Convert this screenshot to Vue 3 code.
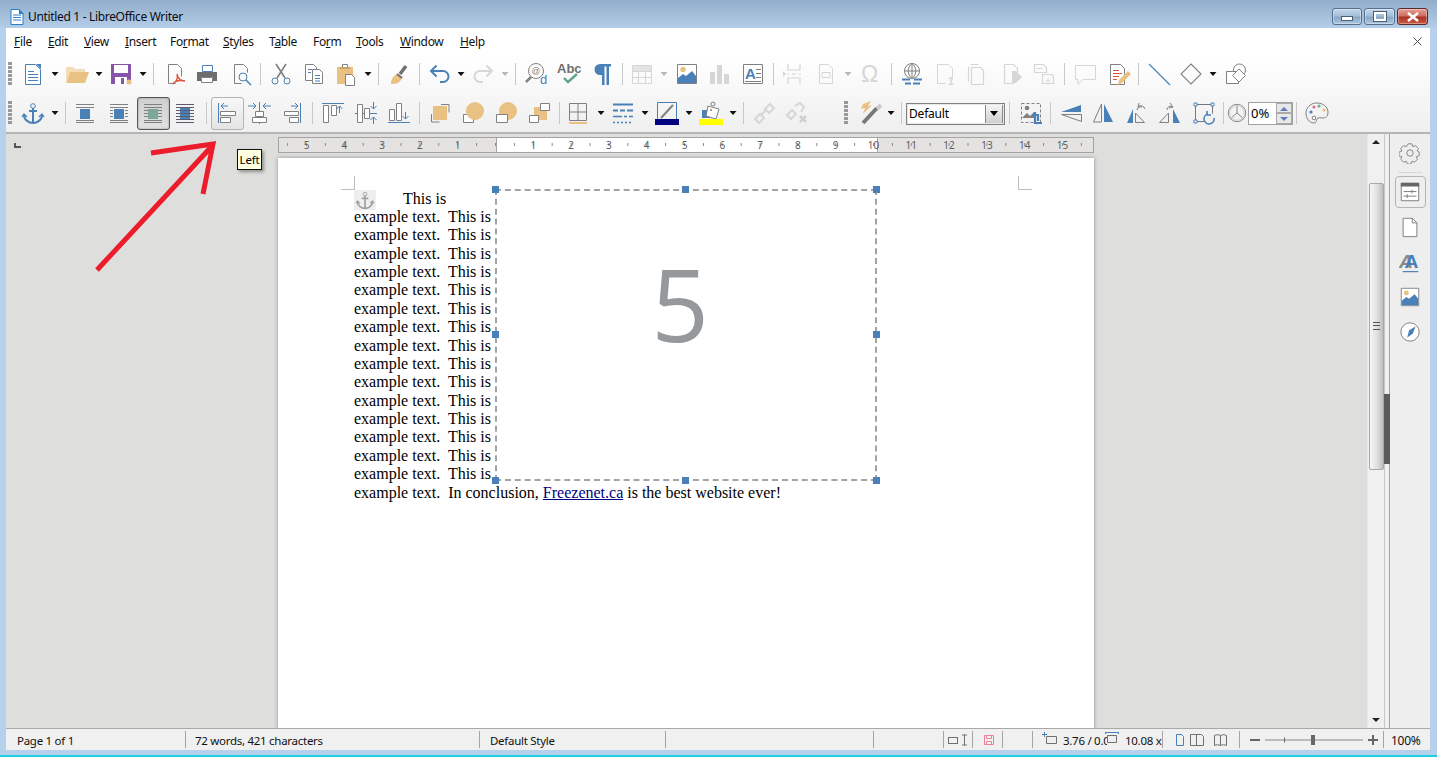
<script setup>
const B = '#4a80b8', G = '#808080', O = '#e9c283', D = '#d6d6d6', R = '#d9543a'
const s = (d, c = G, w = 1) => `<path d="${d}" fill="none" stroke="${c}" stroke-width="${w}"/>`
const f = (d, c = G) => `<path d="${d}" fill="${c}"/>`
const w = (d, c = G) => `<path d="${d}" fill="#fff" stroke="${c}"/>`
const c = (x, y, r, fill = 'none', st = 'none') => `<circle cx="${x}" cy="${y}" r="${r}" fill="${fill}" stroke="${st}"/>`
const t = (x, y, str, size, fill, weight = 400) => `<text x="${x}" y="${y}" font-family="Liberation Sans, sans-serif" font-size="${size}" font-weight="${weight}" fill="${fill}">${str}</text>`

const icons = {
  new: w('M4.5 2.5h10l5 5v15h-15z', B) + f('M15 2h5v5z', B) + s('M7 9.5h6M7 12.5h10M7 15.5h10M7 18.5h10', B),
  open: f('M1 20V6l1-1h6l2 2h10v3H5z', '#f3dcb6') + f('M1 21l4-11h19l-4 11z', O),
  save: f('M2 2h20v20H2z', '#8654a8') + f('M5 3h14v8H5z', '#fff') + f('M6 15h12v7H6z', '#fff') + f('M12 16h3v6h-3z', '#8654a8') + c(20, 20, 2.5, O),
  pdf: s('M5.5 2.5h9l4 4v8M5.5 2.5v19h7', G) + s('M14 12c1 5 3 7 8 7-5-1-10 0-12 3 3-2 5-6 4-10', R, 1.3),
  print: f('M2 10h20v9H2z', '#6d6d6d') + w('M7.5 3.5h10v6h-10z', B) + f('M6 15h12v1H6z', '#fff') + w('M6.5 15.5h11v5h-11z', G),
  preview: s('M5.5 2.5h9l4 4v4M5.5 2.5v19h7', G) + c(14, 15, 4, 'none', B) + s('M17 18l5 5', B, 1.5),
  cut: s('M7 2l9 14M17 2L8 16', G, 1.6) + c(6, 19, 3, 'none', B) + c(18, 19, 3, 'none', B),
  copy: w('M3.5 2.5h8l3 3v13h-11z', G) + w('M10.5 7.5h7l3 3v11h-10z', G) + s('M13 13.5h5M13 16.5h5M13 19h5M6 7.5h4M6 10.5h3', B),
  paste: f('M3 5h16v17H3z', O) + w('M8.5 2.5h5v3h-5z', G) + w('M11.5 12.5h6l3 3v8h-9z', G) + f('M6 5h10v2H6z', '#c9a468'),
  clone: s('M14 12l6-8', '#707070', 3.5) + f('M5 22c0-5 2-8 6-10l5 4c-1 3-4 6-9 6z', O) + s('M11 12l5 4', '#707070', 2),
  undo: s('M4 9h12a5.5 5.5 0 010 11h-3', B, 2) + s('M9.5 3.5L4 9l5.5 5.5', B, 2),
  redo: s('M20 9H8a5.5 5.500 0 000 11h3', D, 2) + s('M14.5 3.5L20 9l-5.5 5.5', D, 2),
  find: c(11, 9, 7.5, 'none', G) + s('M6 15l-5 5', G, 2.5) + t(6.5, 12, '@', 8.5, G) + t(15, 22, 'd', 13, B),
  spell: t(0, 11, 'Abc', 13, '#707070', 700) + s('M7 16l4 4 9-8', '#5fa58f', 2.4),
  pilcrow: f('M10 2h11v2.5h-2V23h-2.5V4.5h-2V23H12V13h-2a5.5 5.5 0 010-11z', B),
  table: s('M2.5 3.5h19v18h-19zM2.5 9.5h19M2.5 15.5h19M8.5 3.5v18M15.5 3.5v18', D) + f('M3 4h18v5H3z', '#e4e4e4'),
  image: w('M2.5 2.5h19v19h-19z', G) + c(8, 7.5, 2.7, O) + f('M3 21v-5l5-4 3 2 6-5 4 5v7z', B),
  chart: f('M3 10h5v12H3zM10 3h5v19h-5zM17 12h5v10h-5z', D),
  textbox: w('M2.5 2.5h19v19h-19z', G) + t(4, 17, 'A', 15, B, 700) + s('M15 7.5h5M15 11.5h5M15 15.5h5M4 19.5h16', G),
  pagebreak: s('M6 2v6h12V2M6 22v-6h12v6M5 12h2M10 12h4M17 12h2', D, 1.2) + f('M1 9l3 3-3 3z', D),
  field: s('M5.5 2.5h9l4 4v15h-13z', D) + s('M8 10.5h8v5H8z', D),
  omega: t(2, 20, 'Ω', 23, D),
  link: c(12, 9, 7.5, 'none', G) + s('M12 1.5v15M4.5 9h15M12 1.5c-5 4-5 11 0 15M12 1.5c5 4 5 11 0 15', G) + s('M2 17.5h8M14 17.5h8M5 21.5h6M13 21.5h7', B, 2),
  fn: s('M4.5 2.5h11l4 4v11M4.5 2.5v19h8', D) + t(15, 23, '1', 10, D, 700),
  en: s('M5.5 2.5h8M3.5 4.5v15M6.5 5.5h9l3 3v14h-12z', D, 1.2),
  bookmark: s('M4.5 2.5h9l4 4v4M4.5 2.5v19h9', D, 1.2) + f('M12 9h4l6 6-6 6h-4z', D),
  cross: s('M2.5 2.5h9l3 3v5h-12zM10.5 12.5h9l2 2v7h-11z', D, 1.2) + s('M4 6.5h7M16 16v4M14 18l2 2 2-2', D),
  comment: s('M2.5 3.5h20v14H10l-5 5v-5H2.5z', D),
  track: w('M3.5 2.5h10l4 4v16h-14z', G) + s('M6 8.5h6M6 11.5h9M6 14.5h6M6 17.5h4', R) + f('M11 23l1-5 9-9 3 3-9 9z', O),
  line: s('M2 2l21 21', B, 1.1),
  diamond: s('M12 2l10 10-10 10L2 12z', G, 1.1),
  shapes: c(15.5, 8, 6, 'none', G) + w('M2.5 9.5h12v12h-12z', G) + w('M15 7l6.5 6.5-6.5 6.5-6.5-6.5z', G),
  anchor: c(12, 5, 2.3, 'none', B) + s('M12 7v15M8 10h8M3 14c0 5 5 8 9 8s9-3 9-8', B, 2) + s('M1 16l2-3 3 3M18 16l3-3 2 3', B, 1.3),
  wrap1: s('M3 3.5h18M3 6.5h18M3 19.5h18M3 21.5h18', G) + f('M7 8h10v10H7z', B),
  wrap2: s('M3 3.5h18M3 6.5h18M3 19.5h18M3 21.5h18M3 9.5h3M3 12.5h3M3 15.5h3M18 9.5h3M18 12.5h3M18 15.5h3', G) + f('M7 8h10v10H7z', B),
  wrap3: s('M3 3.5h18M3 6.5h18M3 19.5h18M3 21.5h18M3 9.5h18M3 12.5h18M3 15.5h18', G) + f('M7 8h10v10H7z', '#7ba899'),
  wrap4: f('M7 6h10v12H7z', B) + s('M3 3.5h18M3 6.5h18M3 9.5h18M3 12.5h18M3 15.5h18M3 18.5h18M3 21.5h18', '#5b5b6b'),
  alignL: s('M3.5 2v20M13 5H6M9 2L6 5l3 3', B) + w('M5.5 10.5h15v4h-15zM5.5 16.5h10v5h-10z', G),
  alignC: s('M12.5 1v22M1 5h7M6 2l3 3-3 3M24 5h-7M19 2l-3 3 3 3', B) + w('M8.5 10.5h8v5h-8zM5.5 16.5h14v5h-14z', G),
  alignR: s('M20.5 2v20M11 5h7M15 2l3 3-3 3', B) + w('M4.5 10.5h14v4h-14zM9.5 16.5h9v5h-9z', G),
  top: s('M1 2.5h22M18.5 12V5M15.5 8l3-3 3 3', B) + w('M2.5 4.5h5v17h-5zM10.5 4.5h5v10h-5z', G),
  mid: s('M1 12.5h22M19.5 1v7M16.5 5l3 3 3-3M19.5 23v-7M16.5 19l3-3 3 3', B) + w('M3.5 3.5h5v18h-5zM10.5 7.5h5v10h-5z', G),
  bot: s('M1 21.5h22M18.5 11v7M15.5 15l3 3 3-3', B) + w('M2.5 8.5h5v11h-5zM9.5 2.5h5v17h-5z', G),
  front: s('M13 3.5h8v8M3.5 13v8h8', G) + f('M5 5h14v14H5z', O),
  forward: w('M2.5 13.5h10v8h-10z', G) + c(14, 10, 9, O),
  backward: c(14, 10, 9, O) + w('M2.5 13.5h11v8h-11z', G),
  back: f('M7 6h13v13H7z', O) + w('M13.5 2.5h9v7h-9zM2.5 14.5h9v7h-9z', G),
  borders: s('M3.5 2.5h17v17h-17zM12 2.5v17M3.5 11h17', G) + f('M3 21h18v2H3z', O),
  bstyle: s('M2 3.5h20', B, 2) + s('M2 9.5h5M9 9.5h5M16 9.5h6', B, 2) + s('M2 15.5h9M13 15.5h3M18 15.5h4', B, 1.5) + s('M2 21.5h2M6 21.5h2M10 21.5h2M14 21.5h2M18 21.5h2', B, 1.5),
  lcolor: s('M2.5 1.5h19v17h-19z', B) + s('M6 17l12-13', G, 2),
  fcolor: f('M3 9h8v8H3z', B) + w('M9 5l11 3-3 10-10-3z', G) + c(14, 3, 2, 'none', G) + c(12, 9, 1, G),
  chain: s('M3 18l5-5 4 4-5 5zM13 8l5-5 4 4-5 5zM9 14l5-5', D, 2),
  unchain: s('M3 14l5-5 4 4-5 5zM11 5l5-3 4 4-3 5', D, 2) + s('M16 15l6 6M22 15l-6 6', '#cfcfcf', 2.5),
  magic: s('M3 22L17 7', '#777', 4) + s('M17 8L21 4', '#ccc', 4) + f('M3 3l8-3-3 5 4-1-9 9 2-6-4 1z', O),
  crop: s('M2.5 2.5h19v19h-19z', G).replace('stroke-width="1"', 'stroke-width="1" stroke-dasharray="3 2"') + c(8, 7, 2.3, G) + f('M3 17l5-5 3 3 4-4v6H3z', G) + s('M16 11v11h7M13 14h6v6', B, 2.2),
  flipV: f('M2 11l20-7v7z', B) + s('M2.5 13.5h20v7z', G),
  flipH: s('M10.5 3v18h-8z', G) + f('M13 3v18h9z', B),
  rotL: f('M2 22l6-14v14z', B) + s('M10.5 12v9.5h9zM12 9l2-4a5 5 0 016 3M14 2l-1 4 4 0', G),
  rotR: s('M1.5 21.5h9V12zM9 9c0-3 3-5 6-3M12 2l3 4-4 1', G) + f('M22 22l-7-14v14z', B),
  rot: s('M3.5 3.5h17v9', '#777') + s('M3.5 3.5v17h9', '#777') + w('M2 2h3v3H2zM19 2h3v3h-3zM2 19h3v3H2z', B) + s('M22 17a5 5 0 11-6-4M15 10v4h4', B, 1.6),
  trans: c(12, 12, 9.5, 'none', G) + s('M12 3v9M12 12l-7 6M12 12l7 6', G) + c(12, 12, 8, 'none', '#ccc'),
  palette: s('M12 2C5 2 1 7 1 12s3 10 8 10c3 0 2-3 3-4 1-2 4-1 6-1 4 0 5-3 5-6 0-5-5-9-11-9z', G) + c(6, 11, 1.6, B) + c(9, 6, 1.6, '#e07090') + c(14, 5, 1.6, '#6fae90') + c(19, 9, 1.6, O) + c(9, 17, 1.8, '#fff', G),
  gear: s('M10 2h4l1 3 3-1 3 3-1 3 2 1v4l-3 1 1 3-3 3-3-1-1 3h-4l-1-3-3 1-3-3 1-3-3-1v-4l3-1-1-3 3-3 3 1z', G) + c(12, 12, 3.5, 'none', G),
  props: w('M2.5 2.5h19v19h-19z', '#777') + f('M2 2h20v4H2z', '#666') + s('M5 11.5h14M5 16.5h14M14 9.5v4M9 14.5v4', '#777'),
  page: w('M4.5 2.5h10l5 5v15h-15z', '#777') + s('M14.5 2.5v5h5', '#777'),
  fonts: t(0, 19, 'A', 21, '#888', 700).replace('<text', '<text font-style="italic"') + t(6, 19, 'A', 21, B, 700) + s('M4 22.5h17', B, 1.3),
  compass: c(12, 12, 10, '#fff', '#777') + f('M18 6l-3 8-6 4 2-8z', B),
}

function layout(items) {
  let end = 6
  return items.map(([name, x, width = 24, cls = '']) => {
    const kind = ['drop', 'sep', 'grip'].includes(name) ? name : ['combo', 'spin'].includes(name) ? name : 'icon'
    const wd = kind === 'drop' ? 7 : kind === 'sep' ? 1 : kind === 'grip' ? 4 : width
    const left = x - wd / 2
    const m = left - end
    end = left + wd
    return { name, kind, cls, width: wd, margin: m }
  })
}

const row1 = layout([
  ['grip', 10], ['new', 33], ['drop', 55], ['open', 77], ['drop', 99], ['save', 121], ['drop', 143], ['sep', 153],
  ['pdf', 175], ['print', 207], ['preview', 241], ['sep', 260], ['cut', 281], ['copy', 314], ['paste', 346], ['drop', 368],
  ['sep', 378], ['clone', 398], ['sep', 419], ['undo', 439], ['drop', 461], ['redo', 484], ['drop', 505, 7, 'off'], ['sep', 515],
  ['find', 537], ['spell', 569], ['pilcrow', 602], ['sep', 622], ['table', 642], ['drop', 664, 7, 'off'], ['image', 687],
  ['chart', 719], ['textbox', 753], ['sep', 773], ['pagebreak', 794], ['field', 826], ['drop', 848, 7, 'off'], ['omega', 871],
  ['sep', 891], ['link', 912], ['fn', 945], ['en', 977], ['bookmark', 1012], ['cross', 1044], ['sep', 1064], ['comment', 1085],
  ['track', 1119], ['sep', 1138], ['line', 1159], ['diamond', 1191], ['drop', 1213], ['shapes', 1236],
])
const row2 = layout([
  ['grip', 10], ['anchor', 33], ['drop', 55], ['sep', 65], ['wrap1', 85], ['wrap2', 119], ['wrap3', 153, 33, 'on'], ['wrap4', 185], ['sep', 206],
  ['alignL', 227, 33, 'hover'], ['alignC', 259], ['alignR', 292], ['sep', 312], ['top', 333], ['mid', 366], ['bot', 399], ['sep', 419],
  ['front', 440], ['forward', 473], ['backward', 506], ['back', 539], ['sep', 559], ['borders', 578], ['drop', 601], ['bstyle', 623], ['drop', 645],
  ['lcolor', 667], ['drop', 689], ['fcolor', 711], ['drop', 733], ['sep', 743], ['chain', 764], ['unchain', 796], ['grip', 846], ['magic', 872], ['drop', 891],
  ['sep', 901], ['combo', 955.5, 99], ['sep', 1009], ['crop', 1031], ['sep', 1050], ['flipV', 1071], ['flipH', 1103], ['rotL', 1137], ['rotR', 1170], ['rot', 1204],
  ['sep', 1223], ['trans', 1237, 22], ['spin', 1270.5, 45], ['sep', 1296], ['palette', 1317],
])

const menus = [['', 'F', 'ile', 14], ['', 'E', 'dit', 48], ['', 'V', 'iew', 84], ['', 'I', 'nsert', 125], ['Fo', 'r', 'mat', 170], ['', 'S', 'tyles', 223], ['T', 'a', 'ble', 269], ['Fo', 'r', 'm', 313], ['', 'T', 'ools', 356], ['', 'W', 'indow', 400], ['', 'H', 'elp', 460]]
  .map((m, i, all) => ({ pre: m[0], key: m[1], post: m[2], width: (all[i + 1] ? all[i + 1][3] : 490) - m[3] }))

const ticks = []
for (let i = -5; i <= 15; i++) {
  if (i !== 0) ticks.push({ n: Math.abs(i), x: 217.5 + i * 37.8 })
}
const minor = []
for (let i = -11; i <= 31; i++) minor.push(217.5 + (i * 37.8) / 2)
const bodyLine = 'example text.  This is'
const lines = Array.from({ length: 15 }, () => bodyLine)
const lastStart = 'example text.  In conclusion, '
const handles = ['tl', 'tc', 'tr', 'cl', 'cr', 'bl', 'bc', 'br']
const sideIcons = ['page', 'fonts', 'image', 'compass']
</script>

<template>
  <div class="win">
    <header class="title">
      <svg class="appicon" viewBox="0 0 14 16" width="14" height="16"><path d="M1 .5h8l4 4v11H1z" fill="#fff" stroke="#2d7fc4"/><path d="M9 0l5 5H9z" fill="#2d7fc4"/><path d="M3 6h8M3 8.5h8M3 11h8" stroke="#2d7fc4"/></svg>
      <span class="title-text">Untitled 1 - LibreOffice Writer</span>
      <div class="caps">
        <div class="cap c1"><i class="min"></i></div>
        <div class="cap"><i class="max"></i></div>
        <div class="cap close"><svg viewBox="0 0 14 10" width="14" height="10"><path d="M2 1l10 8M12 1L2 9" stroke="#fff" stroke-width="2.6"/></svg></div>
      </div>
    </header>

    <div class="body">
      <nav class="menu">
        <span v-for="m in menus" :key="m.pre + m.key + m.post" class="mi" :style="{ width: m.width + 'px' }">{{ m.pre }}<u>{{ m.key }}</u>{{ m.post }}</span>
        <svg class="menu-x" viewBox="0 0 9 9" width="9" height="9"><path d="M.5.5l8 8M8.5.5l-8 8" stroke="#555"/></svg>
      </nav>

      <div class="bars">
        <div v-for="(row, ri) in [row1, row2]" :key="ri" class="bar" :class="'bar' + ri">
          <template v-for="(it, i) in row" :key="i">
            <span v-if="it.kind === 'grip'" class="grip" :style="{ marginLeft: it.margin + 'px' }"></span>
            <span v-else-if="it.kind === 'sep'" class="sep" :style="{ marginLeft: it.margin + 'px' }"></span>
            <span v-else-if="it.kind === 'drop'" class="drop" :class="it.cls" :style="{ marginLeft: it.margin + 'px' }"></span>
            <div v-else-if="it.kind === 'combo'" class="combo" :style="{ marginLeft: it.margin + 'px', width: it.width + 'px' }">
              <span class="combo-t">Default</span><span class="combo-b"><i></i></span>
            </div>
            <div v-else-if="it.kind === 'spin'" class="spin" :style="{ marginLeft: it.margin + 'px', width: it.width + 'px' }">
              <span class="spin-t">0%</span>
              <span class="spin-b"><b class="up"></b><b class="dn"></b></span>
            </div>
            <div v-else class="btn" :class="it.cls" :style="{ marginLeft: it.margin + 'px', width: it.width + 'px' }">
              <svg viewBox="0 0 24 24" width="24" height="24" v-html="icons[it.name]"></svg>
              <span v-if="it.name === 'lcolor'" class="swatch navy"></span>
              <span v-if="it.name === 'fcolor'" class="swatch yellow"></span>
            </div>
          </template>
        </div>
      </div>

      <div class="work">
        <div class="doc">
          <i class="corner-mark"></i>
          <svg class="ruler" viewBox="0 0 816 16" width="816" height="16">
            <rect x=".5" y=".5" width="815" height="15" fill="#e4e3e2" stroke="#a3a3a3" />
            <rect x="218" y="1" width="381" height="14" fill="#fff" />
            <path d="M218.500 .5v15M599.500 .5v15" stroke="#a3a3a3" />
            <path v-for="x in minor" :key="x" :d="`M${x} 6v3`" stroke="#8a8a8a" />
            <text v-for="k in ticks" :key="k.x" :x="k.x" y="12" class="rnum">{{ k.n }}</text>
          </svg>
          <div class="page">
            <i class="mark mk-l"></i><i class="mark mk-r"></i>
            <div class="text">
              <div class="line first">This is</div>
              <div v-for="(l, i) in lines" :key="i" class="line">{{ l }}</div>
              <div class="line">{{ lastStart }}<a class="link">Freezenet.ca</a> is the best website ever!</div>
            </div>
            <div class="anchor-tag"><svg viewBox="0 0 24 24" width="20" height="20" v-html="icons.anchor.replaceAll(B, '#a0a0a0')"></svg></div>
            <div class="frame">
              <span class="five">5</span>
              <i v-for="h in handles" :key="h" class="h" :class="h"></i>
            </div>
          </div>
          <div class="tip">Left</div>
          <svg class="arrow" viewBox="0 0 130 135" width="130" height="135">
            <path d="M6 129L122 4M60 12L122 3l-10 50" fill="none" stroke="#ec1c2b" stroke-width="5" />
          </svg>
        </div>

        <div class="scroll">
          <span class="sc-up"></span>
          <div class="thumb"><span class="thumb-g"></span></div>
          <span class="sc-dn"></span>
        </div>
        <div class="handle"><i></i></div>
        <aside class="side">
          <svg viewBox="0 0 24 24" width="22" height="22" v-html="icons.gear"></svg>
          <span class="side-rule"></span>
          <div class="side-on"><svg viewBox="0 0 24 24" width="22" height="22" v-html="icons.props"></svg></div>
          <svg v-for="n in sideIcons" :key="n" class="side-i" viewBox="0 0 24 24" width="22" height="22" v-html="icons[n]"></svg>
        </aside>
      </div>

      <footer class="status">
        <span class="st s1">Page 1 of 1</span>
        <span class="st s2">72 words, 421 characters</span>
        <span class="st s3">Default Style</span>
        <span class="st s4"></span>
        <span class="st s5"></span>
        <span class="st s6"><svg viewBox="0 0 24 12" width="24" height="12"><rect x="1.5" y="3.5" width="9" height="6" fill="none" stroke="#707070"/><path d="M15 1h5M17.500 1v10M15 11h5" stroke="#707070" fill="none"/></svg></span>
        <span class="st s7"><svg viewBox="0 0 12 12" width="12" height="12"><path d="M1.500 1.500h9v9h-9zM3.500 1.500v3h5v-3M3.500 10.500v-3h5v3" fill="none" stroke="#e8829a"/></svg></span>
        <span class="st s8"></span>
        <span class="st s9">
          <svg class="pos" viewBox="0 0 16 12" width="16" height="12"><path d="M4.500 4.500h10v7h-10z" fill="none" stroke="#707070"/><path d="M0 2.500h5M2.500 0v5" stroke="#4a80b8"/></svg>
          <span class="clip1">3.76 / 0.00</span>
          <svg class="pos2" viewBox="0 0 14 12" width="14" height="12"><path d="M2.500 3.500h9v7h-9z" fill="#f0f0f0" stroke="#707070"/><path d="M.5.500h13M.5 0v2M13.500 0v2" stroke="#4a80b8"/></svg>
          <span class="clip2">10.08 x</span>
        </span>
        <span class="st s10">
          <svg viewBox="0 0 56 12" width="56" height="12"><path d="M1.500.5h5l2 2v9h-7z" fill="none" stroke="#4a80b8"/><path d="M15.500.5h6v11h-6zM21.500.5h5l2 2v9h-7z" fill="none" stroke="#707070"/><path d="M39.500 1.500c2-1 4-1 6 0 2-1 4-1 6 0v10c-2-1-4-1-6 0-2-1-4-1-6 0zM45.500 1.500v10" fill="none" stroke="#707070"/></svg>
        </span>
        <span class="st s11">
          <svg viewBox="0 0 132 12" width="132" height="12"><path d="M0 6h10" stroke="#666" stroke-width="2"/><path d="M15 6h98" stroke="#888"/><path d="M34.500 3.500v5" stroke="#666"/><rect x="61" y="1" width="4" height="10" fill="#666"/><path d="M118 6h10M123 1v10" stroke="#666" stroke-width="2"/></svg>
        </span>
        <span class="st s12">100%</span>
      </footer>
    </div>
    <div class="edge"></div>
  </div>
</template>

<style>
html, body { margin: 0; overflow: hidden; }
</style>

<style scoped>
.win { width: 1437px; height: 757px; overflow: hidden; position: relative; box-sizing: border-box; display: flex; flex-direction: column;
  background: #b6d1ec; font: 12px/16px "Noto Sans", sans-serif; color: #000; }
.title { height: 28px; flex: none; display: flex; align-items: center; padding: 6px 0 0 10px; background: linear-gradient(#92adca, #b4cee8); box-sizing: border-box; }
.appicon { margin-right: 4px; margin-top: -1px; }
.title-text { font-size: 12px; color: #0b0b14; letter-spacing: -.33px; }
.caps { margin-left: auto; margin-right: 9px; display: flex; gap: 2px; align-self: flex-start; margin-top: 2px; }
.cap { width: 31px; height: 17px; box-sizing: border-box; border: 1px solid #55718f; border-radius: 3px; background: linear-gradient(#c4d6ea 0, #a5bfdb 45%, #8aa6c5 55%, #a9c6e2 100%); display: flex; align-items: center; justify-content: center; box-shadow: inset 0 0 0 1px rgba(255,255,255,.35); }
.cap.c1 { width: 30px; }
.cap.close { background: linear-gradient(#e3a297 0, #cf6e5f 45%, #ac3324 55%, #c85b48 100%); border-color: #5b2a2a; }
.min { width: 10px; height: 3px; border: 1px solid #4b5e76; background: #fff; margin-top: 4px; }
.max { width: 8px; height: 5px; border: 2px solid #fff; outline: 1px solid #4b5e76; }
.body { margin: 0 7px 0 6px; width: 1424px; height: 722px; flex: none; background: #fff; display: flex; flex-direction: column; }
.menu { height: 28px; flex: none; background: #fff; display: flex; align-items: center; padding-left: 8px; position: relative; color: #111; }
.mi { display: block; white-space: nowrap; flex: none; font-size: 12px; letter-spacing: -.35px; }
.menu-x { position: absolute; right: 8px; top: 9px; }
.bars { height: 76px; flex: none; background: linear-gradient(#fff, #efefef); border-bottom: 2px solid #b5b5b5; box-sizing: content-box; }
.bar { display: flex; align-items: center; }
.bar0 { height: 36px; }
.bar1 { height: 40px; padding-top: 2px; box-sizing: border-box; }
.grip { flex: none; width: 4px; height: 24px; background: repeating-linear-gradient(#999 0 3px, transparent 3px 4px); }
.sep { flex: none; width: 1px; height: 22px; background: #c8c8c8; }
.drop { flex: none; width: 7px; height: 4px; background: #111; clip-path: polygon(0 0, 100% 0, 50% 100%); }
.drop.off { background: #b8b8b8; }
.btn { flex: none; height: 33px; display: flex; align-items: center; justify-content: center; position: relative; box-sizing: border-box; }
.btn.on { border: 1px solid #555; border-radius: 3px; background: linear-gradient(#cfcfcf, #e2e2e2); box-shadow: inset 0 0 2px #888; }
.btn.hover { border: 1px solid #b4b4b4; border-radius: 3px; background: linear-gradient(#f8f8f8, #e4e4e4); }
.swatch { position: absolute; left: 0; width: 24px; height: 6px; bottom: 5px; }
.navy { background: #000080; }
.yellow { background: #ffff00; }
.combo { flex: none; height: 22px; box-sizing: border-box; border: 1px solid #808080; background: #fff; display: flex; align-items: center; font-size: 12px; outline: 1px solid #e8e8e8; outline-offset: -2px; margin-top: 1px; }
.combo-t { flex: 1; padding: 1px 0 0 2px; letter-spacing: -.2px; }
.combo-b { width: 16px; height: 18px; border: 1px solid #8a8a8a; margin-right: 1px; background: linear-gradient(#f5f5f5, #cfcfcf); display: flex; align-items: center; justify-content: center; }
.combo-b i { width: 0; height: 0; border: 4px solid transparent; border-top: 5px solid #000; border-bottom: 0; }
.spin { flex: none; height: 23px; box-sizing: border-box; border: 1px solid #a0a0a0; background: #fff; display: flex; align-items: center; }
.spin-t { flex: 1; padding-left: 2px; font-size: 13px; }
.spin-b { width: 16px; height: 21px; display: flex; flex-direction: column; }
.spin-b b { flex: 1; border: 1px solid #aaa; background: #e7e7e7; position: relative; }
.spin-b b::after { content: ""; position: absolute; left: 3px; top: 3px; border: 4px solid transparent; }
.up::after { border-bottom: 4px solid #5e7cc0 !important; border-top: 0 !important; }
.dn::after { border-top: 4px solid #5e7cc0 !important; border-bottom: 0 !important; }

.work { height: 594px; flex: none; display: flex; background: #dededc; overflow: hidden; }
.doc { width: 1361px; flex: none; position: relative; display: flex; flex-direction: column; overflow: hidden; padding-left: 272px; padding-top: 3px; box-sizing: border-box; }
.corner-mark { position: absolute; left: 8px; top: 9px; width: 7px; height: 5px; border-left: 2px solid #555; border-bottom: 2px solid #555; box-sizing: border-box; }
.ruler { flex: none; display: block; }
.rnum { font: 10px "Noto Sans", sans-serif; text-anchor: middle; fill: #5c5c5c; }
.page { margin-top: 5px; width: 816px; height: 700px; flex: none; background: #fff; position: relative; box-shadow: 0 0 4px rgba(0,0,0,.35); padding: 31.6px 0 0 76px; box-sizing: border-box; }
.text { font: 16px/18.375px "Liberation Serif", serif; color: #000; white-space: pre; }
.line.first { padding-left: 49px; }
.link { color: #000080; text-decoration: underline; }
.mark { position: absolute; top: 18px; width: 14px; height: 14px; box-sizing: border-box; border-bottom: 1px solid #bdbdbd; }
.mk-l { left: 63px; border-right: 1px solid #bdbdbd; }
.mk-r { left: 740px; border-left: 1px solid #bdbdbd; }
.anchor-tag { position: absolute; left: 76px; top: 32px; width: 22px; height: 20px; background: #eeeeee; display: flex; justify-content: center; align-items: center; }
.frame { position: absolute; left: 217px; top: 31px; width: 382px; height: 292px; box-sizing: border-box; border: 2px dashed #a3a3a3; display: flex; align-items: center; justify-content: center; padding: 0 12px 64px 0; }
.five { font: 400 101px/1 "Open Sans", sans-serif; color: #96999c; }
.h { position: absolute; width: 7px; height: 7px; background: #4a80b8; }
.tl, .tc, .tr { top: -5px; } .cl, .cr { top: 140px; } .bl, .bc, .br { bottom: -5px; }
.tl, .cl, .bl { left: -5px; } .tc, .bc { left: 185px; } .tr, .cr, .br { right: -5px; }
.tip { position: absolute; left: 231px; top: 15px; height: 21px; width: 25px; box-sizing: border-box; background: #ffffe1; border: 1px solid #111; text-align: center; line-height: 19px; font-size: 11.5px; letter-spacing: -.2px; box-shadow: 2px 2px 3px rgba(0,0,0,.35); }
.arrow { position: absolute; left: 85px; top: 7px; }

.scroll { width: 17px; flex: none; background: #f0f0f0; border-left: 1px solid #e8e8e8; box-sizing: border-box; display: flex; flex-direction: column; align-items: center; padding-top: 6px; height: 594px; }
.sc-up { width: 0; height: 0; border: 4px solid transparent; border-bottom: 4px solid #222; border-top: 0; flex: none; }
.thumb { width: 15px; height: 287px; margin-top: 39px; flex: none; border: 1px solid #a8a8a8; box-sizing: border-box; border-radius: 2px; background: linear-gradient(90deg, #f6f6f6, #e0e0e0 55%, #bdbdbd); display: flex; align-items: center; justify-content: center; }
.thumb-g { width: 7px; height: 6px; border-top: 1px solid #555; border-bottom: 1px solid #555; background: linear-gradient(#555, #555) center / 100% 1px no-repeat; margin-bottom: 2px; }
.sc-dn { width: 0; height: 0; border: 4px solid transparent; border-top: 4px solid #222; border-bottom: 0; margin-top: auto; margin-bottom: 6px; flex: none; }
.handle { flex: none; background: #f0f0f0; border-right: 1px solid #a3a3a3; border-left: 1px solid #c9c9c9; position: relative; width: 4px; }
.handle i { position: absolute; left: -1px; top: 260px; width: 6px; height: 70px; background: #5c5c5c; }
.side { flex: 1; background: #eeeeee; display: flex; flex-direction: column; align-items: center; padding-top: 8px; box-sizing: border-box; }
.side-rule { width: 24px; height: 1px; background: #d8d8d8; margin-top: 8px; }
.side-on { width: 31px; height: 32px; margin-top: 3px; border: 1px solid #b4b4b4; border-radius: 4px; box-sizing: border-box; display: flex; align-items: center; justify-content: center; flex: none; }
.side-i { margin-top: 13px; flex: none; }
.side-on + .side-i { margin-top: 8px; }

.status { height: 22px; flex: none; background: #f0f0f0; border-top: 1px solid #a8a8a8; box-sizing: border-box; display: flex; align-items: center; font-size: 11.5px; letter-spacing: -.28px; color: #111; }
.st { height: 17px; flex: none; border-right: 1px solid #a5a5a5; box-sizing: border-box; display: flex; align-items: center; white-space: nowrap; overflow: hidden; padding-top: 1px; }
.s1, .s2, .s3, .s12 { padding-top: 3px; }
.s1 { width: 180px; padding-left: 11px; }
.s2 { width: 294px; padding-left: 9px; }
.s3 { width: 186px; padding-left: 10px; }
.s4 { width: 208px; }
.s5 { width: 70px; }
.s6 { width: 29px; padding-left: 3px; }
.s7 { width: 30px; padding-left: 10px; }
.s8 { width: 30px; }
.s9 { width: 130px; position: relative; }
.pos { margin-left: 9px; margin-top: -4px; }
.clip1 { width: 44px; overflow: hidden; margin: 2px 0 0 5px; flex: none; }
.pos2 { flex: none; margin-top: -4px; margin-left: -2px; }
.clip2 { margin: 2px 0 0 6px; }
.s10 { width: 77px; padding-left: 12px; }
.s11 { width: 144px; padding-left: 10px; }
.s12 { width: 41px; border-right: 0; padding-left: 7px; font-size: 12px; }
.edge { height: 2px; width: 100%; background: #1ccde4; position: absolute; bottom: 0; left: 0; }
</style>
